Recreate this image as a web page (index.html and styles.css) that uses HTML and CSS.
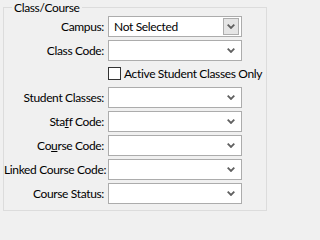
FILE: index.html
```html
<!DOCTYPE html>
<html>
<head>
<meta charset="utf-8">
<link rel="stylesheet" href="styles.css">
</head>
<body>
<div class="group">
  <span class="legend">Class/Course</span>
  <div class="form">
    <label class="lbl">Campus:</label>
    <div class="combo combo-btn">
      <span class="val">Not Selected</span>
      <span class="btn"><svg width="8" height="5" viewBox="0 0 8 5"><path d="M0.7 0.7 L4 4 L7.3 0.7" fill="none" stroke="#606060" stroke-width="1.8"/></svg></span>
    </div>

    <label class="lbl">Class Code:</label>
    <div class="combo"><span class="val"></span><span class="arrow"><svg width="8" height="5" viewBox="0 0 8 5"><path d="M0.7 0.7 L4 4 L7.3 0.7" fill="none" stroke="#606060" stroke-width="1.8"/></svg></span></div>

    <span></span>
    <div class="check"><span class="box"></span><span>Active Student Classes Only</span></div>

    <label class="lbl">Student Classes:</label>
    <div class="combo"><span class="val"></span><span class="arrow"><svg width="8" height="5" viewBox="0 0 8 5"><path d="M0.7 0.7 L4 4 L7.3 0.7" fill="none" stroke="#606060" stroke-width="1.8"/></svg></span></div>

    <label class="lbl">Sta<u>f</u>f Code:</label>
    <div class="combo"><span class="val"></span><span class="arrow"><svg width="8" height="5" viewBox="0 0 8 5"><path d="M0.7 0.7 L4 4 L7.3 0.7" fill="none" stroke="#606060" stroke-width="1.8"/></svg></span></div>

    <label class="lbl">Co<u>u</u>rse Code:</label>
    <div class="combo"><span class="val"></span><span class="arrow"><svg width="8" height="5" viewBox="0 0 8 5"><path d="M0.7 0.7 L4 4 L7.3 0.7" fill="none" stroke="#606060" stroke-width="1.8"/></svg></span></div>

    <label class="lbl">Linked Course Code:</label>
    <div class="combo"><span class="val"></span><span class="arrow"><svg width="8" height="5" viewBox="0 0 8 5"><path d="M0.7 0.7 L4 4 L7.3 0.7" fill="none" stroke="#606060" stroke-width="1.8"/></svg></span></div>

    <label class="lbl">Course Status:</label>
    <div class="combo"><span class="val"></span><span class="arrow"><svg width="8" height="5" viewBox="0 0 8 5"><path d="M0.7 0.7 L4 4 L7.3 0.7" fill="none" stroke="#606060" stroke-width="1.8"/></svg></span></div>
  </div>
</div>
</body>
</html>
```

FILE: styles.css
```css
html, body {
  margin: 0;
  padding: 0;
  background: #f0f0f0;
}
body {
  font-family: "Lato", "Liberation Sans", sans-serif;
  font-size: 12px;
  letter-spacing: -0.35px;
  color: #000;
}
.group {
  position: relative;
  margin: 7px 5px 0 3px;
  width: 262px;
  height: 202px;
  border: 1px solid #dcdcdc;
}
.legend {
  position: absolute;
  top: -8px;
  left: 8px;
  padding: 0 2px;
  background: #f0f0f0;
  line-height: 15px;
  white-space: nowrap;
}
.form {
  display: grid;
  grid-template-columns: 100px 134px;
  grid-template-rows: 21px 21px 20px 21px 21px 21px 21px 21px;
  column-gap: 4px;
  row-gap: 3px;
  padding-top: 8px;
}
.lbl {
  text-align: right;
  line-height: 21px;
  white-space: nowrap;
}
.combo {
  box-sizing: border-box;
  height: 21px;
  border: 1px solid #acacac;
  background: #fff;
  display: flex;
  align-items: center;
}
.val {
  flex: 1;
  padding-left: 5px;
  line-height: 19px;
  white-space: nowrap;
}
.arrow {
  width: 17px;
  display: flex;
  align-items: center;
  justify-content: center;
  padding-right: 2px;
}
.combo-btn .btn {
  box-sizing: border-box;
  width: 16px;
  height: 17px;
  margin-right: 2px;
  border: 1px solid #adadad;
  background: #e5e5e5;
  display: flex;
  align-items: center;
  justify-content: center;
}
.check {
  display: flex;
  align-items: center;
  gap: 3px;
  align-self: start;
  margin-top: 2px;
  white-space: nowrap;
}
.check .box {
  flex-shrink: 0;
  box-sizing: border-box;
  width: 13px;
  height: 13px;
  border: 1px solid #333;
  background: #fff;
}
u {
  text-decoration: underline;
  text-underline-offset: 1px;
}
```
